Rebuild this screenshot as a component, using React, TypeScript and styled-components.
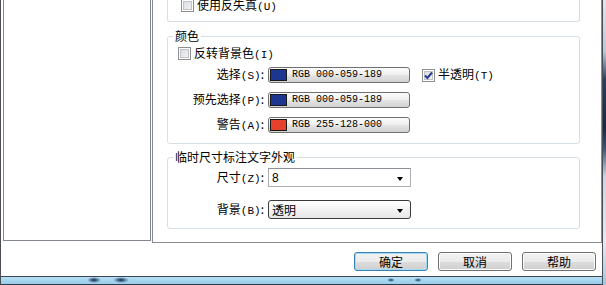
import React from "react";
import styled, { createGlobalStyle } from "styled-components";

const GlobalStyle = createGlobalStyle`
  html, body {
    margin: 0;
    padding: 0;
    background: #fff;
  }
  body {
    width: 606px;
    height: 285px;
    overflow: hidden;
    font-family: "Noto Sans CJK SC", "Liberation Sans", sans-serif;
    font-size: 12px;
    color: #000;
  }
`;

const Screen = styled.div`
  display: flex;
  width: 606px;
  height: 285px;
  overflow: hidden;
`;

const Window = styled.div`
  width: 601px;
  display: flex;
  flex-direction: column;
  background: #fff;
  border-left: 1px solid #4b4f55;
  border-right: 1px solid #4b4f55;
`;

const Desktop = styled.div`
  width: 3px;
  background: linear-gradient(
    to bottom,
    #dfe6ec 0%,
    #b9c9d8 18%,
    #2a3d63 28%,
    #18264a 45%,
    #3b557c 52%,
    #c9d6e2 62%,
    #e4ebf1 85%,
    #9fc6e0 100%
  );
`;

const Body = styled.div`
  display: flex;
  height: 243px;
  padding-left: 2px;
`;

const ListPanel = styled.div`
  width: 148px;
  height: 241px;
  box-sizing: border-box;
  border: 1px solid #828790;
  border-top: none;
  margin-right: 1px;
`;

const Page = styled.div`
  flex: 1;
  height: 243px;
  box-sizing: border-box;
  border: 1px solid #898c95;
  border-top: none;
  padding: 0 21px 0 14px;
  display: flex;
  flex-direction: column;
`;

const TopGroup = styled.div`
  height: 22px;
  box-sizing: border-box;
  border: 1px solid #d5dfe5;
  border-top: none;
  border-radius: 0 0 3px 3px;
  box-shadow: inset 1px 0 0 #fff;
  padding-left: 13px;
`;

const Group = styled.fieldset<{ $gap?: number }>`
  margin: ${(p) => p.$gap ?? 0}px 0 0;
  padding: 4px 10px ${(p) => (p.$gap === 6 ? 9 : 10)}px;
  border: 1px solid #d5dfe5;
  border-radius: 3px;
  min-inline-size: auto;
`;

const GroupTitle = styled.legend`
  padding: 0 2px;
  margin-left: -5px;
  line-height: 14px;
  font-size: 12px;
`;

const CheckRow = styled.div<{ $offset?: number }>`
  display: flex;
  align-items: center;
  gap: 3px;
  height: 13px;
  line-height: 13px;
  margin-top: ${(p) => p.$offset ?? 0}px;
  white-space: nowrap;
`;

const Box = styled.span`
  width: 13px;
  height: 13px;
  box-sizing: border-box;
  border: 1px solid #8e8f8f;
  background: linear-gradient(135deg, #d6d9de 0%, #f7f7f7 100%);
  box-shadow: inset 0 0 0 1px #fff, inset 0 0 0 2px #bfc3c9;
  display: inline-flex;
  align-items: center;
  justify-content: center;
  flex-shrink: 0;
`;

const Key = styled.span`
  font-family: "Liberation Mono", monospace;
  font-size: 11px;
`;

const Rows = styled.div<{ $gap: number; $top: number }>`
  display: flex;
  flex-direction: column;
  gap: ${(p) => p.$gap}px;
  margin-top: ${(p) => p.$top}px;
`;

const Row = styled.div`
  display: flex;
  align-items: center;
  white-space: nowrap;
`;

const FieldLabel = styled.span`
  width: 86px;
  margin-right: 4px;
  text-align: right;
  line-height: 14px;
`;

const ColorButton = styled.div`
  width: 142px;
  height: 16px;
  box-sizing: border-box;
  border: 1px solid #707070;
  border-radius: 3px;
  background: linear-gradient(#fbfbfb 0%, #f1f1f1 45%, #e2e2e2 55%, #d2d2d2 100%);
  display: flex;
  align-items: center;
  padding-left: 1px;
  gap: 5px;
  font-family: "Liberation Mono", monospace;
  font-size: 10px;
  line-height: 14px;
`;

const Swatch = styled.span<{ $color: string }>`
  width: 17px;
  height: 12px;
  box-sizing: border-box;
  border: 1px solid #1a1a1a;
  background: ${(p) => p.$color};
`;

const Side = styled.div`
  margin-left: 12px;
`;

const Combo = styled.div<{ $list?: boolean }>`
  width: 143px;
  height: 19px;
  box-sizing: border-box;
  display: flex;
  align-items: center;
  justify-content: space-between;
  padding: 0 7px 0 3px;
  line-height: 14px;
  border: 1px solid ${(p) => (p.$list ? "#3a3a3a" : "#abadb3")};
  border-top-color: ${(p) => (p.$list ? "#3a3a3a" : "#8e9097")};
  border-radius: ${(p) => (p.$list ? 3 : 0)}px;
  background: ${(p) => (p.$list ? "linear-gradient(#ffffff 0%, #f3f3f3 50%, #e6e6e6 100%)" : "#fff")};
`;

const ComboValue = styled.span<{ $latin?: boolean }>`
  font-family: ${(p) => (p.$latin ? '"Liberation Sans", sans-serif' : '"Noto Sans CJK SC", sans-serif')};
  font-size: 12px;
`;

const Arrow = styled.span`
  width: 0;
  height: 0;
  border-left: 3.5px solid transparent;
  border-right: 3.5px solid transparent;
  border-top: 4px solid #000;
  margin-top: 2px;
`;

const Footer = styled.div`
  height: 33px;
  box-sizing: border-box;
  display: flex;
  justify-content: flex-end;
  align-items: flex-start;
  gap: 10px;
  padding: 9px 6px 0 0;
`;

const Button = styled.div<{ $default?: boolean }>`
  width: 74px;
  height: 19px;
  box-sizing: border-box;
  border: 1px solid ${(p) => (p.$default ? "#3c7fb1" : "#707070")};
  border-radius: 3px;
  background: linear-gradient(#f2f2f2 0%, #ebebeb 50%, #dddddd 51%, #cfcfcf 100%);
  box-shadow: inset 0 0 0 1px ${(p) => (p.$default ? "#9fdcf6" : "#fcfcfc")};
  display: flex;
  align-items: center;
  justify-content: center;
  line-height: 17px;
`;

const BottomBar = styled.div`
  flex: 1;
  border-top: 1px solid #3a4656;
  border-bottom: 1px solid #2f3a48;
  background:
    radial-gradient(ellipse 7px 3px at 93px 3px, #0d2450 0%, rgba(13, 36, 80, 0) 100%),
    radial-gradient(ellipse 8px 3px at 120px 3px, #0d2450 0%, rgba(13, 36, 80, 0) 100%),
    radial-gradient(ellipse 4px 2px at 390px 3px, #1b3766 0%, rgba(27, 55, 102, 0) 100%),
    radial-gradient(ellipse 4px 2px at 417px 3px, #1b3766 0%, rgba(27, 55, 102, 0) 100%),
    linear-gradient(#b7e0f5, #98cdea);
`;

const Check = () => (
  <svg width="9" height="9" viewBox="0 0 9 9">
    <path d="M1 4.5 L3.4 7 L8 1.5" fill="none" stroke="#2a3c8e" strokeWidth="2" />
  </svg>
);

const CheckBox = ({ checked, text, k }: { checked?: boolean; text: string; k: string }) => (
  <>
    <Box>{checked && <Check />}</Box>
    <span>
      {text}
      <Key>({k})</Key>
    </span>
  </>
);

const colors = [
  { label: "选择", k: "S", color: "#1c3790", value: "RGB 000-059-189", side: true },
  { label: "预先选择", k: "P", color: "#1c3790", value: "RGB 000-059-189" },
  { label: "警告", k: "A", color: "#e5412b", value: "RGB 255-128-000" },
];

export default function App() {
  return (
    <Screen>
      <GlobalStyle />
      <Window>
        <Body>
          <ListPanel />
          <Page>
            <TopGroup>
              <CheckRow $offset={-1}>
                <CheckBox text="使用反失真" k="U" />
              </CheckRow>
            </TopGroup>

            <Group $gap={7}>
              <GroupTitle>颜色</GroupTitle>
              <CheckRow>
                <CheckBox text="反转背景色" k="I" />
              </CheckRow>
              <Rows $gap={9} $top={7}>
                {colors.map((c) => (
                  <Row key={c.k}>
                    <FieldLabel>
                      {c.label}
                      <Key>({c.k})</Key>:
                    </FieldLabel>
                    <ColorButton>
                      <Swatch $color={c.color} />
                      {c.value}
                    </ColorButton>
                    {c.side && (
                      <Side>
                        <CheckRow>
                          <CheckBox checked text="半透明" k="T" />
                        </CheckRow>
                      </Side>
                    )}
                  </Row>
                ))}
              </Rows>
            </Group>

            <Group $gap={6}>
              <GroupTitle>临时尺寸标注文字外观</GroupTitle>
              <Rows $gap={13} $top={0}>
                <Row>
                  <FieldLabel>
                    尺寸<Key>(Z)</Key>:
                  </FieldLabel>
                  <Combo>
                    <ComboValue $latin>8</ComboValue>
                    <Arrow />
                  </Combo>
                </Row>
                <Row>
                  <FieldLabel>
                    背景<Key>(B)</Key>:
                  </FieldLabel>
                  <Combo $list>
                    <ComboValue>透明</ComboValue>
                    <Arrow />
                  </Combo>
                </Row>
              </Rows>
            </Group>
          </Page>
        </Body>
        <Footer>
          <Button $default>确定</Button>
          <Button>取消</Button>
          <Button>帮助</Button>
        </Footer>
        <BottomBar />
      </Window>
      <Desktop />
    </Screen>
  );
}
